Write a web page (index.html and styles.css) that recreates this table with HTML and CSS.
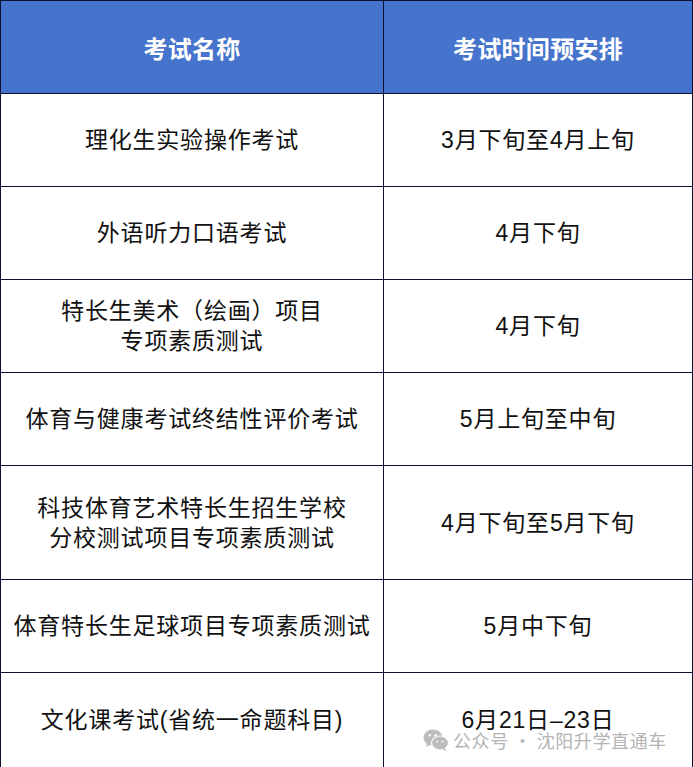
FILE: index.html
```html
<!DOCTYPE html>
<html lang="zh">
<head>
<meta charset="utf-8">
<link rel="stylesheet" href="styles.css">
</head>
<body>
<div class="wrap">
<table class="sched">
  <colgroup><col class="c1"><col class="c2"></colgroup>
  <thead>
    <tr class="r-head"><th>考试名称</th><th>考试时间预安排</th></tr>
  </thead>
  <tbody>
    <tr class="r"><td>理化生实验操作考试</td><td>3月下旬至4月上旬</td></tr>
    <tr class="r"><td>外语听力口语考试</td><td>4月下旬</td></tr>
    <tr class="r"><td>特长生美术（绘画）项目<br>专项素质测试</td><td>4月下旬</td></tr>
    <tr class="r"><td>体育与健康考试终结性评价考试</td><td>5月上旬至中旬</td></tr>
    <tr class="r-tall"><td>科技体育艺术特长生招生学校<br>分校测试项目专项素质测试</td><td>4月下旬至5月下旬</td></tr>
    <tr class="r"><td>体育特长生足球项目专项素质测试</td><td>5月中下旬</td></tr>
    <tr class="r-last"><td>文化课考试(省统一命题科目)</td><td>6月21日–23日</td></tr>
  </tbody>
</table>
<div class="wm">
  <svg class="wm-ico" viewBox="0 0 26 24" width="26" height="24">
    <ellipse cx="10" cy="9.5" rx="9.5" ry="8" fill="#bcbcbc"/>
    <path d="M4 15.5 L3 19 L7.5 16.5 Z" fill="#bcbcbc"/>
    <ellipse cx="17" cy="15" rx="8.5" ry="7" fill="#bcbcbc" stroke="#fff" stroke-width="1.2"/>
    <path d="M22 20 L23.5 23 L19.5 21.5 Z" fill="#bcbcbc"/>
    <circle cx="6.8" cy="7.2" r="1.2" fill="#fff"/>
    <circle cx="12.6" cy="7.2" r="1.2" fill="#fff"/>
    <circle cx="14.3" cy="13.6" r="1" fill="#fff"/>
    <circle cx="19.6" cy="13.6" r="1" fill="#fff"/>
  </svg>
  <span class="wm-text">公众号 · 沈阳升学直通车</span>
</div>
</div>
</body>
</html>
```
FILE: styles.css
```css
html, body {
  margin: 0;
  padding: 0;
  background: #fff;
}
.wrap {
  position: relative;
  width: 693px;
  height: 767px;
  overflow: hidden;
}
.sched {
  border-collapse: collapse;
  table-layout: fixed;
  width: 692px;
  font-family: "Liberation Sans", "Noto Sans CJK SC", sans-serif;
  color: #111;
}
.c1 { width: 383px; }
.c2 { width: 309px; }
.sched th, .sched td {
  border: 1.5px solid #0d1233;
  text-align: center;
  vertical-align: middle;
  padding: 0;
}
.sched th {
  background: #4674cc;
  color: #fff;
  font-family: "Noto Sans CJK SC", sans-serif;
  font-weight: 700;
  font-size: 24px;
  letter-spacing: 0.3px;
}
.sched td {
  font-size: 23px;
  letter-spacing: 0.8px;
  line-height: 30px;
}
.r-head { height: 93px; }
.r { height: 93px; }
.r-tall { height: 114px; }
.r-last { height: 95px; }
.wm {
  position: absolute;
  left: 423px;
  top: 727px;
  display: flex;
  align-items: center;
  gap: 4px;
}
.wm-ico { display: block; }
.wm-text {
  font-family: "Noto Sans CJK SC", sans-serif;
  font-size: 18px;
  color: #b3b3b3;
  letter-spacing: 0.6px;
}
```
